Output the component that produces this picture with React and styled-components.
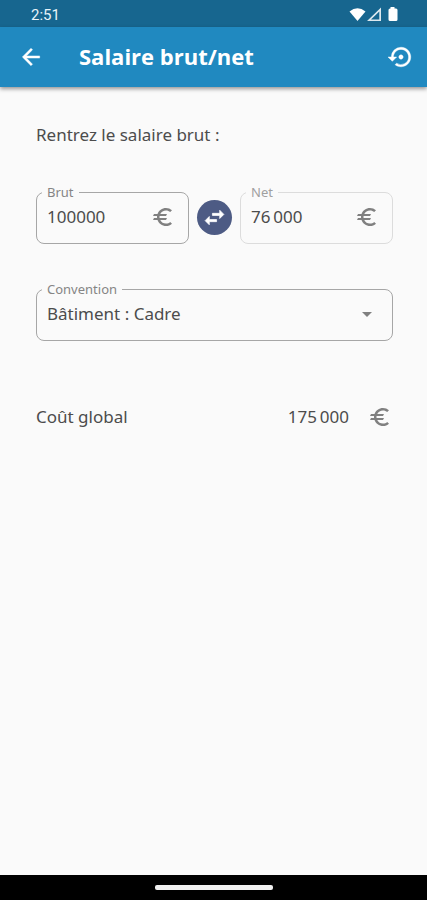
import React, { useState } from "react";
import styled, { createGlobalStyle } from "styled-components";
import {
  MdArrowBack,
  MdArrowDropDown,
  MdEuro,
  MdSettingsBackupRestore,
  MdSwapHoriz,
} from "react-icons/md";

const GlobalStyle = createGlobalStyle`
  *{
    box-sizing: border-box;
  }
  body{
    margin: 0;
    background-color: #fafafa;
    color: #4c4c4c;
    font-family: "Noto Sans", "Open Sans", sans-serif;
    font-size: 17px;
    line-height: 24px;
  }
  button, input, select{
    font: inherit;
    color: inherit;
  }
`

const Screen = styled.div`
  display: flex;
  flex-direction: column;
  min-height: 100vh;
`

const StatusBar = styled.div`
  display: flex;
  align-items: center;
  justify-content: space-between;
  height: 27px;
  padding: 3px 28px 0 31px;
  background-color: #17668f;
  color: #e8f3f9;
  font-family: Roboto, sans-serif;
  font-size: 15px;
`

const StatusIcons = styled.svg`
  width: 50px;
  height: 16px;
  fill: white;
`

const AppBar = styled.header`
  display: flex;
  align-items: center;
  height: 60px;
  padding: 0 13px 0 18px;
  background-color: #2089c0;
  color: white;
  box-shadow: 0 2px 4px rgba(0,0,0,0.4);
  h1{
    flex: 1;
    margin: 0 0 0 35px;
    padding-bottom: 2px;
    font-family: "Open Sans", "Noto Sans", sans-serif;
    font-size: 22px;
    line-height: 30px;
    font-weight: 700;
  }
`

const IconButton = styled.button`
  display: flex;
  padding: 0;
  border: 0;
  background: none;
  color: white;
  font-size: 26px;
  path:last-child{
    stroke: white;
    stroke-width: 0.4px;
  }
`

const Main = styled.main`
  flex: 1;
  display: flex;
  flex-direction: column;
  gap: 37px;
  padding: 36px 34px 36px 36px;
  p{
    margin: 0;
  }
`

const SalaryRow = styled.div`
  display: grid;
  grid-template-columns: 1fr 35px 1fr;
  gap: 8px;
`

const Field = styled.fieldset`
  min-width: 0;
  margin: 0;
  padding: 0 0 9px;
  border: 1px solid ${props => props.$muted ? "#dcdcdc" : "#a6a6a6"};
  border-radius: 8px;
  legend{
    margin-left: 5px;
    padding: 0 5px;
    color: ${props => props.$muted ? "#a0a0a0" : "#858585"};
    font-size: 13px;
    line-height: 16px;
  }
`

const FieldBody = styled.div`
  display: flex;
  align-items: center;
  height: 34px;
  padding: 0 13px 0 10px;
  color: #4c4c4c;
  input, select{
    flex: 1;
    min-width: 0;
    padding: 0;
    border: 0;
    outline: 0;
    background: none;
    appearance: none;
  }
`

const Icon = styled.span`
  display: flex;
  color: #808080;
  font-size: 24px;
`

const SwapButton = styled.button`
  display: flex;
  align-items: center;
  justify-content: center;
  width: 35px;
  height: 35px;
  margin-top: 16px;
  padding: 0;
  border: 0;
  border-radius: 50%;
  background-color: #4d5b84;
  color: white;
  font-size: 25px;
  path:last-child{
    stroke: white;
    stroke-width: 0.7px;
  }
`

const TotalRow = styled.div`
  display: flex;
  align-items: center;
  padding: 27px 1px 0 0;
  output{
    margin: 0 19px 0 auto;
  }
`

const NavBar = styled.div`
  display: flex;
  align-items: center;
  justify-content: center;
  height: 25px;
  background-color: black;
  &::before{
    content: "";
    width: 118px;
    height: 5px;
    border-radius: 2px;
    background-color: #f0f0f0;
  }
`

function App(){

  const [gross, setGross] = useState("100000");

  return(
    <Screen>
      <GlobalStyle />
      <StatusBar>
        <time>2:51</time>
        <StatusIcons viewBox="0 0 50 16" aria-hidden="true">
          <path d="M0.500 4.500Q8.500 -2 16.500 4.500L8.500 14Z" />
          <path fillRule="evenodd" d="M18 14L32 0.500V14ZM22 12.400H30.300V4.400Z" fillOpacity="0.85" />
          <path d="M41.500 1.500V0H45.500V1.500H47Q48.500 1.500 48.500 3V12.500Q48.500 14 47 14H41Q39.500 14 39.500 12.500V3Q39.500 1.500 41 1.500Z" />
        </StatusIcons>
      </StatusBar>
      <AppBar>
        <IconButton aria-label="Retour"><MdArrowBack /></IconButton>
        <h1>Salaire brut/net</h1>
        <IconButton aria-label="Réinitialiser"><MdSettingsBackupRestore /></IconButton>
      </AppBar>
      <Main>
        <p>Rentrez le salaire brut :</p>
        <SalaryRow>
          <Field>
            <legend><label htmlFor="gross">Brut</label></legend>
            <FieldBody>
              <input id="gross" inputMode="numeric" value={gross} onChange={e => setGross(e.target.value)} />
              <Icon><MdEuro /></Icon>
            </FieldBody>
          </Field>
          <SwapButton aria-label="Inverser brut et net"><MdSwapHoriz /></SwapButton>
          <Field $muted>
            <legend><label htmlFor="net">Net</label></legend>
            <FieldBody>
              <input id="net" readOnly value={"76\u202f000"} />
              <Icon><MdEuro /></Icon>
            </FieldBody>
          </Field>
        </SalaryRow>
        <Field>
          <legend><label htmlFor="agreement">Convention</label></legend>
          <FieldBody>
            <select id="agreement">
              <option>Bâtiment : Cadre</option>
            </select>
            <Icon><MdArrowDropDown /></Icon>
          </FieldBody>
        </Field>
        <TotalRow>
          <label htmlFor="total">Coût global</label>
          <output id="total">{"175\u202f000"}</output>
          <Icon><MdEuro /></Icon>
        </TotalRow>
      </Main>
      <NavBar />
    </Screen>
  );
}

export default App;
